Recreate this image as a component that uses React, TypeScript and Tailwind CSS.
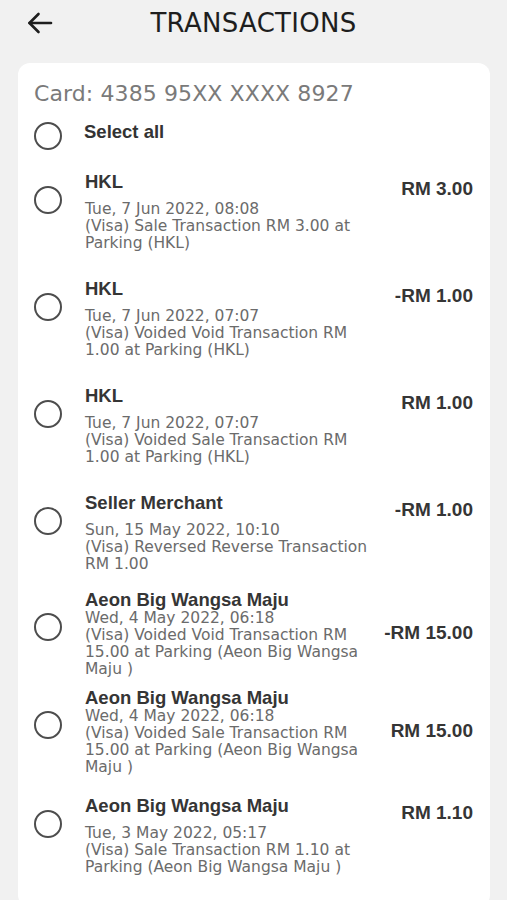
import React from "react";

const rows = [
  { name: "HKL", date: "Tue, 7 Jun 2022, 08:08", lines: ["(Visa) Sale Transaction RM 3.00 at", "Parking (HKL)"], amount: "RM 3.00", tall: false },
  { name: "HKL", date: "Tue, 7 Jun 2022, 07:07", lines: ["(Visa) Voided Void Transaction RM", "1.00 at Parking (HKL)"], amount: "-RM 1.00", tall: false },
  { name: "HKL", date: "Tue, 7 Jun 2022, 07:07", lines: ["(Visa) Voided Sale Transaction RM", "1.00 at Parking (HKL)"], amount: "RM 1.00", tall: false },
  { name: "Seller Merchant", date: "Sun, 15 May 2022, 10:10", lines: ["(Visa) Reversed Reverse Transaction", "RM 1.00"], amount: "-RM 1.00", tall: false },
  { name: "Aeon Big Wangsa Maju", date: "Wed, 4 May 2022, 06:18", lines: ["(Visa) Voided Void Transaction RM", "15.00 at Parking (Aeon Big Wangsa", "Maju )"], amount: "-RM 15.00", tall: true },
  { name: "Aeon Big Wangsa Maju", date: "Wed, 4 May 2022, 06:18", lines: ["(Visa) Voided Sale Transaction RM", "15.00 at Parking (Aeon Big Wangsa", "Maju )"], amount: "RM 15.00", tall: true },
  { name: "Aeon Big Wangsa Maju", date: "Tue, 3 May 2022, 05:17", lines: ["(Visa) Sale Transaction RM 1.10 at", "Parking (Aeon Big Wangsa Maju )"], amount: "RM 1.10", tall: false },
];

function Radio({ className = "" }: { className?: string }) {
  return <span className={`block w-[28px] h-[28px] rounded-full border-2 border-[#4d4d4d] shrink-0 ${className}`} />;
}

export default function App() {
  return (
    <main className="min-h-screen bg-[#f1f1f1] font-['DejaVu_Sans',sans-serif]">
      {/* ── HEADER ── */}
      <header className="grid grid-cols-[70px_1fr_70px] items-center h-[45px]">
        <button className="pl-[27px] flex items-center text-[#1e1e1e]">
          <svg width="26" height="22" viewBox="0 0 26 22" fill="none" stroke="currentColor" strokeWidth="2.6" strokeLinecap="round" strokeLinejoin="round">
            <path d="M24 11H2.5" />
            <path d="M11.5 2 2.5 11l9 9" />
          </svg>
        </button>
        <h1 className="text-center text-[26px] leading-[30px] text-[#1e1e1e] tracking-[0.3px]">TRANSACTIONS</h1>
        <span />
      </header>

      {/* ── CARD ── */}
      <section className="mt-[18px] ml-[18px] mr-[17px] bg-white rounded-[12px] pt-[18px] pl-[16px] pr-[17px] pb-[20px]">
        <p className="text-[22px] leading-[26px] text-[#7a7a7a] tracking-[0.1px]">Card: 4385 95XX XXXX 8927</p>

        <div className="flex items-start mt-[15px] mb-[6px]">
          <Radio />
          <span className="ml-[22px] font-['Liberation_Sans',sans-serif] font-bold text-[18.5px] leading-[20px] text-[#333]">Select all</span>
        </div>

        {rows.map((r, i) => (
          <div key={i} className={`flex items-start ${r.tall ? "pt-[5px] pb-[4px]" : "pt-[16px] pb-[11px]"}`}>
            <Radio className={r.tall ? "mt-[24px]" : "mt-[14px]"} />
            <div className="flex-1 min-w-0 ml-[23px]">
              <p className={`font-['Liberation_Sans',sans-serif] font-bold text-[18.5px] text-[#353535] ${r.tall ? "leading-[21px]" : "leading-[20px]"}`}>{r.name}</p>
              <div className={`text-[15.5px] leading-[17px] text-[#6b6b6b] ${r.tall ? "mt-0" : "mt-[9px]"}`}>
                <p className="whitespace-nowrap">{r.date}</p>
                {r.lines.map(l => (
                  <p key={l} className="whitespace-nowrap">{l}</p>
                ))}
              </div>
            </div>
            <p className={`shrink-0 font-['Liberation_Sans',sans-serif] font-bold text-[19px] leading-[22px] text-[#353535] ${r.tall ? "mt-[33px]" : "mt-[6px]"}`}>{r.amount}</p>
          </div>
        ))}
      </section>
    </main>
  );
}
